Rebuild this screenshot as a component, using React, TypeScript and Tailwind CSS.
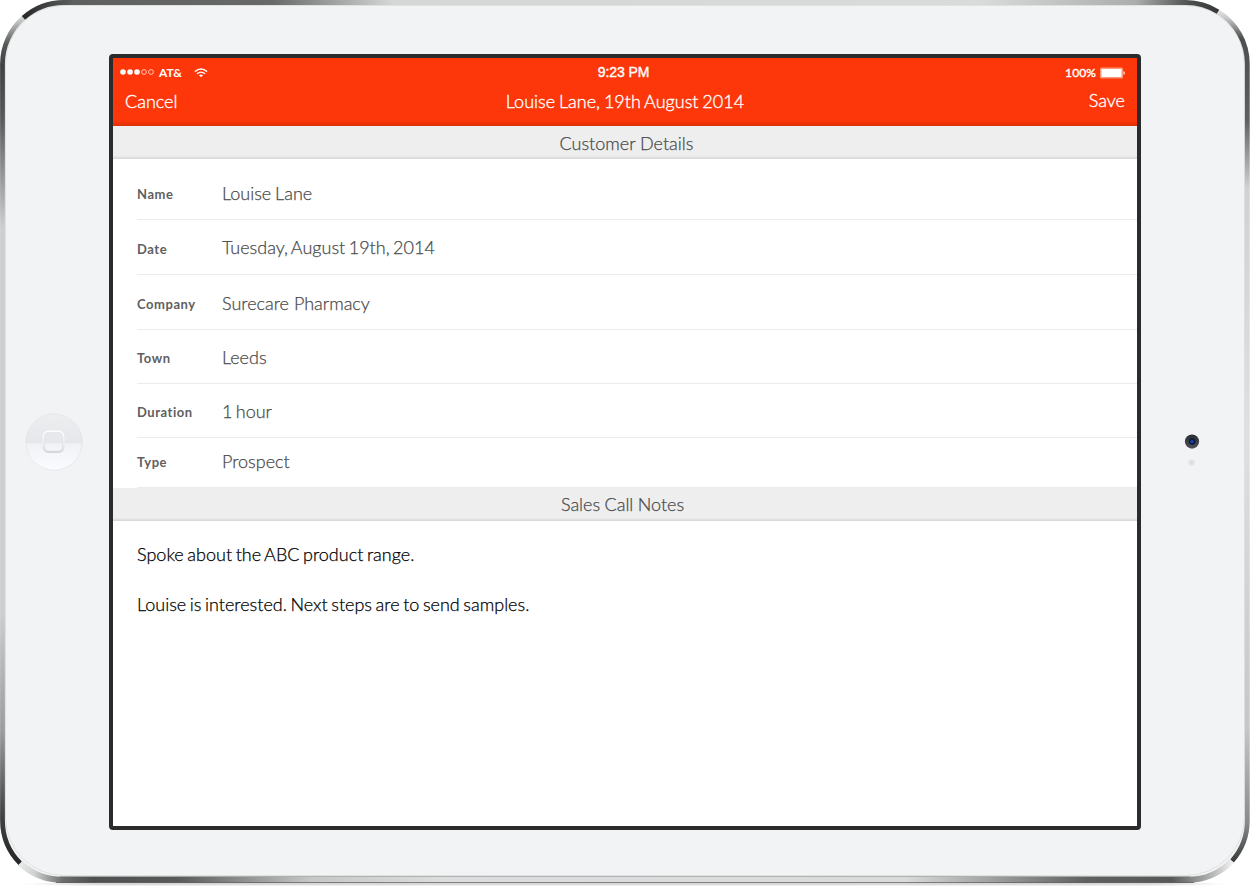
import type { ReactNode } from "react";

const rows = [
  { label: "Name", value: "Louise Lane", box: "h-[61px] pt-[7px]", nudge: "pt-0.5", spacing: "[word-spacing:-1px]" },
  { label: "Date", value: "Tuesday, August 19th, 2014", box: "h-[55px]", nudge: "pt-[3px]", spacing: "[word-spacing:-1.4px]" },
  { label: "Company", value: "Surecare Pharmacy", box: "h-[55px] pt-0.5", nudge: "pt-0.5", spacing: "" },
  { label: "Town", value: "Leeds", box: "h-[54px]", nudge: "pt-0.5", spacing: "" },
  { label: "Duration", value: "1 hour", box: "h-[54px]", nudge: "pt-0.5", spacing: "[word-spacing:-1.6px]" },
  { label: "Type", value: "Prospect", box: "h-[50px] pb-1", nudge: "pt-0.5", spacing: "" },
];

function DeviceEdge() {
  return (
    <svg className="pointer-events-none absolute inset-0" width="1250" height="888" viewBox="0 0 1250 888" fill="none">
      <defs>
        <linearGradient id="top" gradientUnits="userSpaceOnUse" x1="20" y1="0" x2="1220" y2="0">
          <stop offset="0" stopColor="#242625" />
          <stop offset="0.045" stopColor="#5d605e" />
          <stop offset="0.21" stopColor="#666967" />
          <stop offset="0.31" stopColor="#d5d7d6" />
          <stop offset="0.8" stopColor="#d9dbda" />
          <stop offset="0.93" stopColor="#aaadab" />
          <stop offset="0.975" stopColor="#4c4f4d" />
          <stop offset="1" stopColor="#353736" />
        </linearGradient>
        <linearGradient id="bottom" gradientUnits="userSpaceOnUse" x1="20" y1="0" x2="1232" y2="0">
          <stop offset="0" stopColor="#e8e9e9" />
          <stop offset="0.012" stopColor="#cfd1d0" />
          <stop offset="0.035" stopColor="#6b6e6c" />
          <stop offset="0.06" stopColor="#4d504e" />
          <stop offset="0.13" stopColor="#575a58" />
          <stop offset="0.24" stopColor="#c6c8c7" />
          <stop offset="0.35" stopColor="#dcdedd" />
          <stop offset="0.73" stopColor="#d9dbda" />
          <stop offset="0.88" stopColor="#5e615f" />
          <stop offset="0.95" stopColor="#555856" />
          <stop offset="0.985" stopColor="#b9bbba" />
          <stop offset="1" stopColor="#f0f0f0" />
        </linearGradient>
        <linearGradient id="left" gradientUnits="userSpaceOnUse" x1="0" y1="14" x2="0" y2="868">
          <stop offset="0" stopColor="#e2e4e3" />
          <stop offset="0.012" stopColor="#b5b7b6" />
          <stop offset="0.035" stopColor="#565957" />
          <stop offset="0.06" stopColor="#3f4240" />
          <stop offset="0.12" stopColor="#565957" />
          <stop offset="0.25" stopColor="#cccfcd" />
          <stop offset="0.7" stopColor="#cccfcd" />
          <stop offset="0.84" stopColor="#9a9d9b" />
          <stop offset="0.94" stopColor="#3f4240" />
          <stop offset="1" stopColor="#232524" />
        </linearGradient>
        <linearGradient id="right" gradientUnits="userSpaceOnUse" x1="0" y1="8" x2="0" y2="866">
          <stop offset="0" stopColor="#eceded" />
          <stop offset="0.012" stopColor="#c6c8c7" />
          <stop offset="0.035" stopColor="#4c4f4d" />
          <stop offset="0.13" stopColor="#5d605e" />
          <stop offset="0.165" stopColor="#8f9291" />
          <stop offset="0.21" stopColor="#d0d2d1" />
          <stop offset="0.5" stopColor="#dfe1e0" />
          <stop offset="0.84" stopColor="#c5c7c6" />
          <stop offset="0.95" stopColor="#888b89" />
          <stop offset="1" stopColor="#303231" />
        </linearGradient>
        <linearGradient id="shade" x1="0" y1="0" x2="1" y2="0">
          <stop offset="0" stopColor="#000" stopOpacity="0" />
          <stop offset="0.06" stopColor="#000" stopOpacity="0.16" />
          <stop offset="0.94" stopColor="#000" stopOpacity="0.16" />
          <stop offset="1" stopColor="#000" stopOpacity="0" />
        </linearGradient>
      </defs>
      <rect x="22" y="883" width="1206" height="1.5" fill="url(#shade)" />
      <rect x="34" y="884" width="1182" height="2" fill="url(#shade)" opacity="0.4" />
      <rect x="0.5" y="0.5" width="1249" height="882" rx="63" fill="#f2f3f5" />
      <rect x="5.5" y="5.5" width="1239" height="870" rx="58.5" stroke="#dfe1e1" />
      <path d="M23.4 17.9A61.5 61.5 0 0 0 2.5 64V820A61.5 61.5 0 0 0 20.2 863.3" stroke="url(#left)" strokeWidth="4.8" />
      <path d="M1218 11.7A61.5 61.5 0 0 1 1247.3 64V820A61.5 61.5 0 0 1 1232 861" stroke="url(#right)" strokeWidth="4.8" />
      <path d="M23.4 17.9A61.5 61.5 0 0 1 64 2.5H1186A61.5 61.5 0 0 1 1218 11.7" stroke="url(#top)" strokeWidth="4.8" />
      <path d="M20.2 863.3A61.5 60 0 0 0 64 879.8H1186A61.5 60 0 0 0 1232 861" stroke="url(#bottom)" strokeWidth="6" />
      <path d="M56 882.5H1194" stroke="#4b4e4c" strokeOpacity="0.65" />
      <path d="M60 876.5H1190" stroke="#8b8e8c" strokeOpacity="0.6" />
    </svg>
  );
}

function HomeButton() {
  return (
    <svg width="58" height="58" viewBox="0 0 58 58" fill="none">
      <defs>
        <linearGradient id="homeFace" x1="0" y1="0" x2="0" y2="1">
          <stop offset="0" stopColor="#eceef0" />
          <stop offset="0.51" stopColor="#e5e7ea" />
          <stop offset="0.54" stopColor="#f1f2f5" />
          <stop offset="1" stopColor="#fbfcff" />
        </linearGradient>
        <linearGradient id="homeGlyph" x1="0" y1="0" x2="0" y2="1">
          <stop offset="0" stopColor="#fdfdfe" />
          <stop offset="0.6" stopColor="#ededf0" />
          <stop offset="1" stopColor="#d5d6d9" />
        </linearGradient>
      </defs>
      <circle cx="29" cy="29" r="28.2" fill="url(#homeFace)" stroke="#e3e4e7" strokeWidth="0.8" />
      <rect x="18.5" y="18.5" width="20" height="20.5" rx="5" stroke="url(#homeGlyph)" strokeWidth="2" />
      <rect x="19.5" y="19.5" width="18" height="18.5" rx="4" stroke="#dadbde" strokeWidth="0.5" />
    </svg>
  );
}

function Camera() {
  return (
    <svg width="16" height="34" viewBox="0 0 16 34">
      <defs>
        <linearGradient id="lens" x1="0" y1="0" x2="0" y2="1">
          <stop offset="0" stopColor="#2b2c2f" />
          <stop offset="1" stopColor="#505154" />
        </linearGradient>
      </defs>
      <circle cx="8" cy="7.6" r="7.1" fill="url(#lens)" />
      <circle cx="8.2" cy="7.6" r="3.3" fill="#0c1a45" />
      <circle cx="8" cy="7.6" r="1.7" fill="#1446a8" />
      <circle cx="7.4" cy="28.6" r="3.5" fill="#e5e6e8" />
      <circle cx="7.4" cy="28.6" r="1.5" fill="#dcdddf" />
    </svg>
  );
}

function Signal() {
  return (
    <svg width="36" height="8" viewBox="0 0 36 8" fill="none">
      <circle cx="3" cy="4" r="2.8" fill="#fff" />
      <circle cx="10" cy="4" r="2.8" fill="#fff" />
      <circle cx="17" cy="4" r="2.8" fill="#fff" />
      <circle cx="24" cy="4" r="2.4" stroke="#fff" strokeWidth="0.7" />
      <circle cx="31" cy="4" r="2.4" stroke="#fff" strokeWidth="0.7" />
    </svg>
  );
}

function Wifi() {
  return (
    <svg width="14" height="10" viewBox="0 0 14 10" fill="none" stroke="#fff">
      <path d="M0.9 3.6Q7 -1.7 13.1 3.6" strokeWidth="1.4" />
      <path d="M3 5.8Q7 2.4 11 5.8" strokeWidth="1.3" />
      <path d="M7 9.3L5 7.3Q7 5.9 9 7.3Z" fill="#fff" stroke="none" />
    </svg>
  );
}

function Battery() {
  return (
    <svg width="25" height="12" viewBox="0 0 25 12">
      <rect x="0" y="0.5" width="23" height="11" rx="1.5" fill="#ff9675" />
      <rect x="1.5" y="2" width="20" height="8" rx="0.5" fill="#fff" />
      <path d="M23.4 4Q25 4.5 25 6T23.4 8Z" fill="#ffcfc0" />
    </svg>
  );
}

function SectionTitle({ children, inset }: { children: ReactNode; inset: string }) {
  return (
    <h2
      className={`flex h-[33px] items-center justify-center bg-[linear-gradient(to_bottom,#eeeeee_30px,#e4e4e4_31px,#d6d6d6_33px)] text-[18px] leading-[22px] font-light text-[#4a4a4a] [-webkit-text-stroke:0.25px_#4a4a4a] ${inset}`}
    >
      {children}
    </h2>
  );
}

export default function App() {
  return (
    <div className="relative flex h-[888px] w-[1250px] overflow-hidden bg-white font-['Lato',sans-serif]">
      <DeviceEdge />
      <div className="relative flex w-[109px] items-center pb-1 pl-[25px]">
        <HomeButton />
      </div>
      <main className="relative mt-[54px] flex h-[776px] w-[1032px] flex-col rounded-[4px] border-4 border-[#2b2b2c] bg-white">
        <header className="h-[68px] shrink-0 bg-[linear-gradient(to_bottom,#fd370a_62px,#f63407_64px,#de2f06_68px)] text-white">
          <div className="grid h-[28px] grid-cols-3 items-center pr-[12px] pl-[7px] text-[12px] font-bold">
            <div className="flex items-center">
              <Signal />
              <span className="ml-[3px] pt-px">AT&amp;</span>
              <span className="ml-[12px] pt-px">
                <Wifi />
              </span>
            </div>
            <div className="pt-px pl-[2px] text-center font-['Liberation_Sans',sans-serif] text-[14px] font-normal tracking-[-0.1px] [-webkit-text-stroke:0.4px_#fff]">
              9:23 PM
            </div>
            <div className="flex items-center justify-end gap-1 pt-px">
              <span className="font-normal tracking-[0.1px] [-webkit-text-stroke:0.4px_#fff]">100%</span>
              <Battery />
            </div>
          </div>
          <nav className="grid h-[30px] grid-cols-3 items-center px-[12px] text-[18px] leading-[22px] font-light [-webkit-text-stroke:0.35px_#fff]">
            <button className="text-left">Cancel</button>
            <h1 className="text-center whitespace-nowrap [word-spacing:-1px]">Louise Lane, 19th August 2014</h1>
            <button className="pb-0.5 text-right">Save</button>
          </nav>
        </header>
        <SectionTitle inset="pl-[3px]">Customer Details</SectionTitle>
        <dl className="pl-6">
          {rows.map((row) => (
            <div key={row.label} className={`flex items-center border-b border-[#ebebeb] ${row.box}`}>
              <dt className={`w-[85px] text-[13px] leading-4 font-bold tracking-[0.55px] text-[#606060] ${row.nudge}`}>{row.label}</dt>
              <dd className={`text-[18px] leading-[22px] font-light text-[#4a4a4a] [-webkit-text-stroke:0.25px_#4a4a4a] ${row.spacing}`}>
                {row.value}
              </dd>
            </div>
          ))}
        </dl>
        <SectionTitle inset="pr-[5px] pb-px [word-spacing:-0.5px]">Sales Call Notes</SectionTitle>
        <section className="flex flex-col gap-7 pt-[22px] pl-6 text-[18px] leading-[22px] font-light text-black [-webkit-text-stroke:0.25px_#000] [word-spacing:-1.3px]">
          <p>Spoke about the ABC product range.</p>
          <p>Louise is interested. Next steps are to send samples.</p>
        </section>
      </main>
      <div className="relative flex flex-1 justify-center pt-[434px] pr-[8px]">
        <Camera />
      </div>
    </div>
  );
}
